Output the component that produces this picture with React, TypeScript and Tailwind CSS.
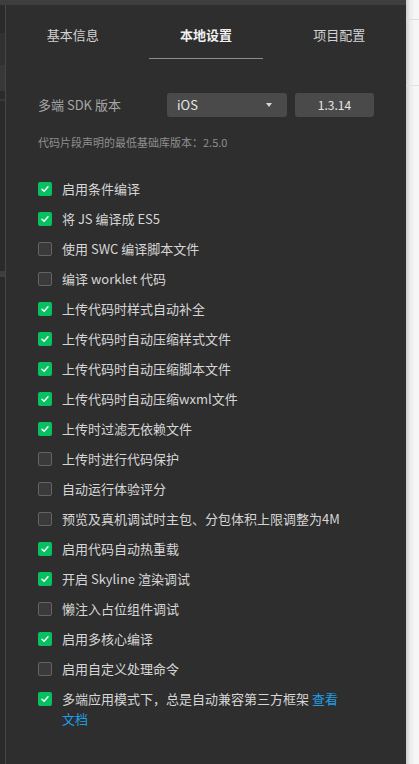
import React from "react";

const items: { label: React.ReactNode; checked: boolean }[] = [
  { label: "启用条件编译", checked: true },
  { label: "将 JS 编译成 ES5", checked: true },
  { label: "使用 SWC 编译脚本文件", checked: false },
  { label: "编译 worklet 代码", checked: false },
  { label: "上传代码时样式自动补全", checked: true },
  { label: "上传代码时自动压缩样式文件", checked: true },
  { label: "上传代码时自动压缩脚本文件", checked: true },
  { label: "上传代码时自动压缩wxml文件", checked: true },
  { label: "上传时过滤无依赖文件", checked: true },
  { label: "上传时进行代码保护", checked: false },
  { label: "自动运行体验评分", checked: false },
  { label: "预览及真机调试时主包、分包体积上限调整为4M", checked: false },
  { label: "启用代码自动热重载", checked: true },
  { label: "开启 Skyline 渲染调试", checked: true },
  { label: "懒注入占位组件调试", checked: false },
  { label: "启用多核心编译", checked: true },
  { label: "启用自定义处理命令", checked: false },
];

function Box({ checked }: { checked: boolean }) {
  if (checked) {
    return (
      <div className="w-[14px] h-[14px] shrink-0 rounded-[2px] bg-[#07c160] flex items-center justify-center">
        <svg width="10" height="10" viewBox="0 0 10 10">
          <path d="M2 5.2 L4.1 7.2 L8 2.8" stroke="#fff" strokeWidth="1.5" fill="none" strokeLinecap="round" strokeLinejoin="round" />
        </svg>
      </div>
    );
  }
  return <div className="w-[14px] h-[14px] shrink-0 rounded-[2px] bg-[#3a3a3a] border border-[#646464]" />;
}

export default function App() {
  return (
    <div className="flex w-[419px] h-[764px] bg-[#2e2e2e] font-['Noto_Sans_CJK_SC',sans-serif] overflow-hidden">
      <div className="w-[406px] flex flex-col">
        <div className="h-[5px] bg-[#3e3e3e]" />
        <div className="flex flex-1">
          <div className="w-[6px] flex flex-col border-r border-[#464646] bg-[#2a2a2a]">
            <div className="h-[28px]" />
            <div className="h-[32px] bg-[#313131]" />
            <div className="h-[26px] bg-[#383838]" />
            <div className="h-[8px] bg-[#2b2b2b]" />
            <div className="h-[2px] bg-[#3a3a3a]" />
            <div className="h-[170px]" />
            <div className="h-[6px] bg-[#3e3e3e]" />
            <div className="flex-1" />
          </div>
          <div className="flex-1 bg-[#2e2e2e] flex flex-col">
            <div className="flex h-[55px]">
              {["基本信息", "本地设置", "项目配置"].map((t, i) => (
                <div key={t} className="flex-1 flex flex-col items-center pt-[20px]">
                  <div className={i === 1 ? "h-[20px] leading-[20px] text-[13px] text-[#f0f0f0] font-semibold" : "h-[20px] leading-[20px] text-[13px] text-[#d2d2d2]"}>
                    {t}
                  </div>
                  {i === 1 && <div className="mt-[13px] w-[114px] h-[1px] bg-[#8c8c8c]" />}
                </div>
              ))}
            </div>
            <div className="px-[32px] pt-[33px]">
              <div className="flex items-center h-[24px]">
                <div className="w-[129px] text-[13px] text-[#a6a6a6]">多端 SDK 版本</div>
                <div className="w-[120px] h-[24px] rounded-[3px] bg-[#4a4a4a] flex items-center justify-between pl-[10px] pr-[15px]">
                  <span className="text-[13px] text-[#e6e6e6]">iOS</span>
                  <svg width="6" height="4" viewBox="0 0 6 4"><path d="M0 0 L6 0 L3 4 Z" fill="#d8d8d8" /></svg>
                </div>
                <div className="ml-[8px] w-[79px] h-[24px] rounded-[3px] bg-[#4a4a4a] flex items-center justify-center text-[12px] text-[#e6e6e6]">
                  1.3.14
                </div>
              </div>
              <div className="mt-[17px] h-[16px] leading-[16px] text-[11px] text-[#8e8e8e]">代码片段声明的最低基础库版本：2.5.0</div>
              <div className="mt-[24px] flex flex-col">
                {items.map((it, idx) => (
                  <div key={idx} className="h-[30px] flex items-center gap-[10px]">
                    <Box checked={it.checked} />
                    <span className="text-[13px] text-[#d6d6d6] whitespace-nowrap">{it.label}</span>
                  </div>
                ))}
                <div className="flex items-start gap-[10px] pt-[5px]">
                  <div className="mt-[3px]"><Box checked={true} /></div>
                  <span className="max-w-[282px] text-[13px] leading-[20px] text-[#d6d6d6]">
                    多端应用模式下，总是自动兼容第三方框架 <span className="text-[#1f9de6]">查看<br />文档</span>
                  </span>
                </div>
              </div>
            </div>
          </div>
        </div>
      </div>
      <div className="w-[13px] flex flex-col bg-[linear-gradient(to_right,#cfcfcf,#ececec_4px,#f6f6f6_9px)]">
        <div className="h-[20px] border-b border-[#dedede]" />
        <div className="h-[66px] border-b border-[#e2e2e2]" />
        <div className="flex-1" />
      </div>
    </div>
  );
}
